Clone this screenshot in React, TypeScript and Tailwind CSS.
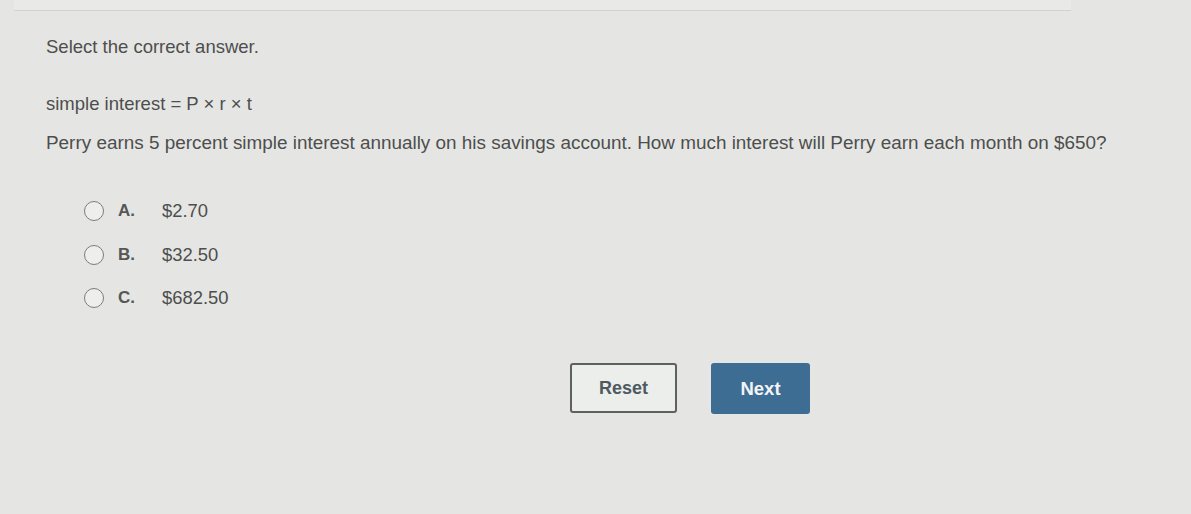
import React from "react";

const options = [
  { letter: "A.", value: "$2.70" },
  { letter: "B.", value: "$32.50" },
  { letter: "C.", value: "$682.50" },
];

export default function App() {
  return (
    <div
      className="w-[1191px] h-[514px] overflow-hidden bg-[#e5e6e3] text-[#4d4e4e] flex flex-col"
      style={{ fontFamily: '"Liberation Sans", Arial, sans-serif' }}
    >
      <div className="h-[11px] bg-[#e9eae8] border-b border-[#d2d3d1] ml-[14px] mr-[120px]" />
      <div className="pl-[46px] pt-[25px] flex flex-col">
        <div className="text-[18.5px] leading-[21px]">Select the correct answer.</div>
        <div className="mt-[36px] text-[18.5px] leading-[21px]">
          simple interest = P × r × t
        </div>
        <div className="mt-[18px] text-[18.9px] leading-[21px] whitespace-nowrap">
          Perry earns 5 percent simple interest annually on his savings account. How much interest will Perry earn each month on $650?
        </div>
        <div className="mt-[48px] pl-[38px] flex flex-col gap-[23.5px]">
          {options.map((o) => (
            <div key={o.letter} className="flex items-center h-[20px]">
              <div className="w-[20px] h-[20px] rounded-full border-[1.5px] border-[#7b7c7c] bg-[#eeefec]" />
              <span className="ml-[14px] w-[44px] font-bold text-[17px] text-[#555656]">{o.letter}</span>
              <span className="text-[18.4px]">{o.value}</span>
            </div>
          ))}
        </div>
      </div>
      <div className="mt-[55px] flex gap-[34px] pl-[570px]">
        <button className="w-[107px] h-[50px] rounded-[3px] border-2 border-[#5f6061] bg-[#eceeeb] text-[#4f5a60] font-bold text-[18px]">
          Reset
        </button>
        <button className="w-[99px] h-[51px] rounded-[3px] bg-[#3e6d94] text-[#f2f4f5] font-bold text-[18.5px]">
          Next
        </button>
      </div>
    </div>
  );
}
